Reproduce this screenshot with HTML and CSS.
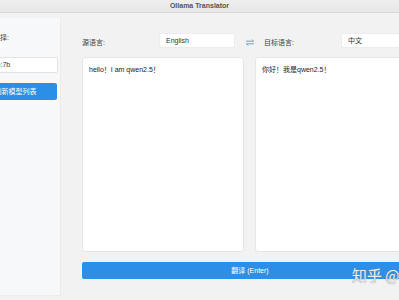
FILE: index.html
```html
<!DOCTYPE html>
<html>
<head>
<meta charset="utf-8">
<link rel="stylesheet" href="styles.css">
</head>
<body>
<div class="window">
  <div class="titlebar">Ollama Translator</div>
  <div class="app">
    <aside class="sidebar">
      <div class="side-label">模型选择:</div>
      <div class="side-input">qwen2.5:7b</div>
      <div class="side-btn">刷新模型列表</div>
    </aside>
    <main class="main">
      <div class="lang-row">
        <div class="lang-label">源语言:</div>
        <div class="lang-input">English</div>
        <div class="swap">
          <svg width="10" height="7" viewBox="0 0 10 7"><path d="M1 2.2H8.6M6.8 0.6L8.6 2.2M9 4.8H1.4M3.2 6.4L1.4 4.8" stroke="#5aa7e8" stroke-width="1" fill="none"/></svg>
        </div>
        <div class="lang-label">目标语言:</div>
        <div class="lang-input">中文</div>
      </div>
      <div class="panes">
        <div class="pane">hello！I am qwen2.5！</div>
        <div class="pane">你好！我是qwen2.5！</div>
      </div>
      <div class="translate-btn">翻译 (Enter)</div>
    </main>
  </div>
  <div class="watermark">知乎 @</div>
</div>
</body>
</html>
```
FILE: styles.css
```css
* { box-sizing: border-box; }
html, body { margin: 0; padding: 0; }
body {
  width: 399px;
  height: 300px;
  overflow: hidden;
  background: #f2f2f2;
  font-family: "Liberation Sans", "Noto Sans CJK SC", sans-serif;
}
.window {
  position: relative;
  width: 399px;
  height: 300px;
  overflow: hidden;
}
.titlebar {
  height: 13px;
  background: linear-gradient(#eeeeee, #e7e7e7);
  border-bottom: 1px solid #d9d9d9;
  text-align: center;
  font-size: 7px;
  font-weight: bold;
  line-height: 12px;
  color: #555;
}
.app {
  display: flex;
  margin-left: -31px;
  width: 480px;
  padding-top: 5px;
}
.sidebar {
  flex: none;
  width: 92px;
  height: 278px;
  background: #f7f8fa;
  border-right: 1px solid #ebebeb;
  border-bottom: 1px solid #ebebeb;
  padding: 0 2px 0 4px;
}
.side-label {
  font-size: 7px;
  color: #444;
  margin-top: 15px;
  margin-left: 6px;
  height: 10px;
  line-height: 10px;
}
.side-input {
  margin-top: 14px;
  height: 16px;
  background: #fff;
  border: 1px solid #e3e3e3;
  border-radius: 2px;
  font-size: 7px;
  line-height: 14px;
  padding-left: 0;
  color: #333;
}
.side-btn {
  margin-top: 10px;
  margin-left: 1px;
  width: 83px;
  height: 17px;
  background: #2b8fe8;
  border-radius: 2px;
  color: #fff;
  font-size: 7px;
  line-height: 17px;
  text-align: center;
}
.main {
  flex: none;
  width: 336px;
  margin-left: 21px;
  padding-top: 15px;
}
.lang-row {
  display: flex;
  align-items: center;
  height: 15px;
}
.lang-label {
  width: 77px;
  font-size: 7px;
  color: #444;
  padding-top: 2px;
}
.lang-input {
  width: 76px;
  height: 15px;
  background: #fff;
  border: 1px solid #ececec;
  border-radius: 2px;
  font-size: 7px;
  line-height: 13px;
  padding-left: 6px;
  color: #333;
}
.swap {
  width: 29px;
  display: flex;
  justify-content: center;
  padding-top: 3px;
}
.panes {
  display: flex;
  gap: 11px;
  margin-top: 9px;
}
.pane {
  width: 162px;
  height: 195px;
  background: #fff;
  border: 1px solid #e6e6e6;
  border-radius: 3px;
  font-size: 7px;
  color: #222;
  padding: 8px 6px;
  line-height: 8px;
}
.translate-btn {
  margin-top: 10px;
  width: 336px;
  height: 17px;
  background: #2b8fe8;
  border-radius: 2px;
  color: #fff;
  font-size: 7px;
  line-height: 17px;
  text-align: center;
}
.watermark {
  position: absolute;
  left: 352px;
  top: 266px;
  font-size: 15px;
  line-height: 18px;
  color: rgba(255,255,255,0.85);
  text-shadow: 0 0 1px #8a8a8a, 0 0 1px #8a8a8a;
  white-space: nowrap;
  font-family: "Noto Sans CJK SC", sans-serif;
}
```
